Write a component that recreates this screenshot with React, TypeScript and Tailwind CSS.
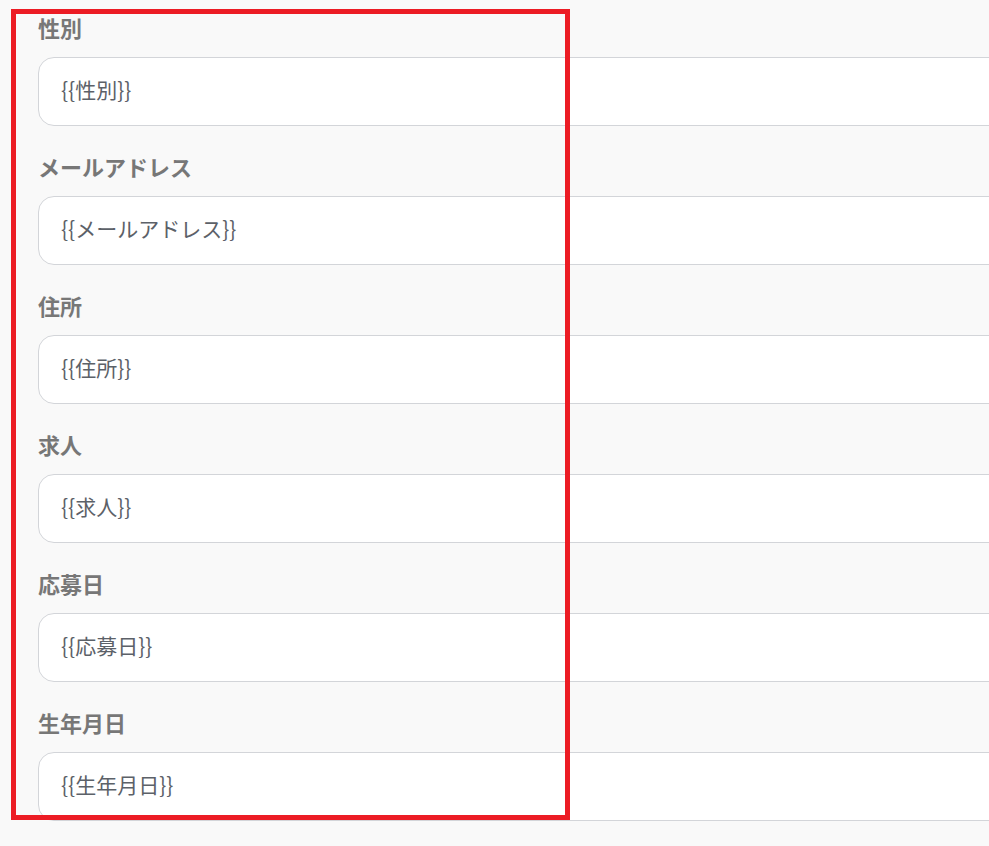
const fields = ["性別", "メールアドレス", "住所", "求人", "応募日", "生年月日"];

export default function App() {
  return (
    <div
      className="relative h-[846px] w-full overflow-hidden bg-[#f9f9f9]"
      style={{ fontFamily: '"Noto Sans CJK JP", "Noto Sans", sans-serif' }}
    >
      <div className="flex w-[1040px] flex-col gap-[26px] pl-[38px] pt-[13px]">
        {fields.map((name) => (
          <div key={name} className="flex flex-col gap-[16px]">
            <label className="text-[22px] font-bold leading-[28px] text-[#777777]">
              {name}
            </label>
            <div className="flex h-[69px] items-center rounded-[16px] border border-[#d3d5d9] bg-white px-[22px] pb-[5px]">
              <span className="text-[21px] leading-[28px] text-[#5c6168]">
                {`{{${name}}}`}
              </span>
            </div>
          </div>
        ))}
      </div>

      {/* annotation frame */}
      <div className="pointer-events-none absolute left-[11px] top-[9px] h-[811px] w-[559px] border-[5px] border-[#ec1c24]" />
    </div>
  );
}
